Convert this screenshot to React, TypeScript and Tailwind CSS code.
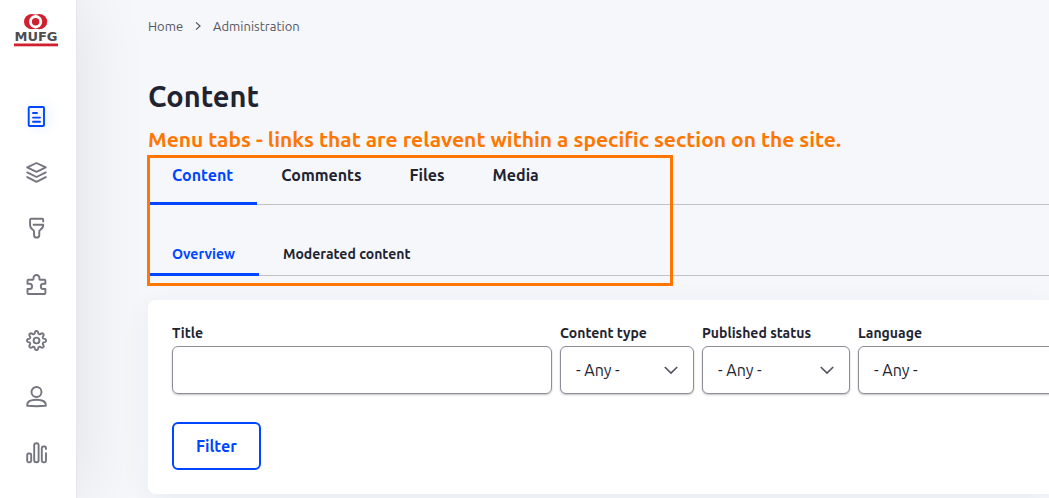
import React from 'react';

type IconProps = { children: React.ReactNode };

const Icon = ({ children }: IconProps) => (
  <svg
    className="h-6 w-6"
    viewBox="0 0 24 24"
    fill="none"
    stroke="currentColor"
    strokeWidth="1.9"
    strokeLinejoin="round"
    strokeLinecap="round"
    aria-hidden="true"
  >
    {children}
  </svg>
);

// Eight rounded teeth around a common centre
const gearPath = () => {
  const points: string[] = [];
  for (let i = 0; i < 128; i++) {
    const a = (i / 128) * Math.PI * 2;
    const wave = Math.cos(8 * a);
    const r = 8.2 + 1.4 * Math.tanh(wave * 1.6);
    points.push(`${(12.5 + r * Math.cos(a)).toFixed(2)} ${(12.5 + r * Math.sin(a)).toFixed(2)}`);
  }
  return `M${points.join('L')}Z`;
};

const menuItems = [
  {
    label: 'Content',
    icon: (
      <Icon>
        <rect x="4.7" y="3" width="15.3" height="19" rx="1" />
        <path d="M9 9h4M9 13.6h7M9 17.7h7" />
      </Icon>
    ),
  },
  {
    label: 'Structure',
    icon: (
      <Icon>
        <path d="M12.5 3 21.8 7.4 12.5 11.8 3.2 7.4ZM3.2 12.4l9.3 4.6 9.3-4.6M3.2 17.1l9.3 4.8 9.3-4.8" />
      </Icon>
    ),
  },
  {
    label: 'Appearance',
    icon: (
      <Icon>
        <path d="M19.2 5.5V3.7a1 1 0 0 0-1-1H7.1a1 1 0 0 0-1 1V9c0 3 1.2 3.9 2.9 4.8.8.4 1 .9 1 1.7v3.4a2.65 2.65 0 0 0 5.3 0v-3.4c0-.8.2-1.3 1-1.7 1.7-.9 2.9-1.8 2.9-4.8v-.3H9.6" />
      </Icon>
    ),
  },
  {
    label: 'Extend',
    icon: (
      <Icon>
        <path d="M4.5 7.8h4.2c.8 0 .9-.5.8-1.3a3 3 0 1 1 5.9 0c-.1.8 0 1.3.8 1.3h4.2a1 1 0 0 1 1 1v3h-2a2.4 2.4 0 0 0 0 5.2h2v4a1 1 0 0 1-1 1H4.5a1 1 0 0 1-1-1v-4h2a2.4 2.4 0 0 0 0-5.2h-2v-3a1 1 0 0 1 1-1Z" />
      </Icon>
    ),
  },
  {
    label: 'Configuration',
    icon: (
      <Icon>
        <path d={gearPath()} />
        <circle cx="12.5" cy="12.5" r="2.9" />
      </Icon>
    ),
  },
  {
    label: 'People',
    icon: (
      <Icon>
        <circle cx="12.5" cy="8" r="5" />
        <path d="M3.1 21.2c0-3.6 4.2-5.4 9.4-5.4s9.4 1.8 9.4 5.4c0 .4-.2.6-.6.6-5.8.5-11.8.5-17.6 0-.4 0-.6-.2-.6-.6Z" />
      </Icon>
    ),
  },
  {
    label: 'Reports',
    icon: (
      <Icon>
        <rect x="3.2" y="13.5" width="4" height="8.7" rx="1.5" />
        <rect x="10.2" y="3.2" width="4.4" height="19" rx="2" />
        <path d="M22 9V8a1.5 1.5 0 0 0-1.5-1.5h-1.2A1.5 1.5 0 0 0 17.8 8v12.7a1.5 1.5 0 0 0 1.5 1.5h1.2a1.5 1.5 0 0 0 1.5-1.5v-7.5" />
      </Icon>
    ),
  },
];

const primaryTabs = ['Content', 'Comments', 'Files', 'Media'];
const secondaryTabs = ['Overview', 'Moderated content'];

const Logo = () => (
  <a href="#home" aria-label="MUFG" className="ml-3.5 block w-11 pt-3.5">
    <svg viewBox="0 0 44 34" className="h-[34px] w-11">
      <ellipse cx="18" cy="7.7" rx="8" ry="7.6" fill="#cf2030" />
      <ellipse cx="25.2" cy="7.7" rx="8" ry="7.6" fill="#cf2030" />
      <circle cx="21.6" cy="7.7" r="6.6" fill="#fff" />
      <circle cx="21.6" cy="7.7" r="3.7" fill="#cf2030" />
      <text x="22" y="27.3" textAnchor="middle" fontSize="13" fontWeight="700" fill="#4d4d4f" fontFamily="'DejaVu Sans', sans-serif">
        MUFG
      </text>
      <rect y="29.5" width="44" height="2.8" fill="#cf2030" />
    </svg>
  </a>
);

const Sidebar = () => (
  <aside className="relative z-10 box-content flex w-19 shrink-0 flex-col border-r border-[#e6e7ec] bg-white shadow-[0_0_72px_rgba(0,0,0,0.1)]">
    <Logo />
    <nav aria-label="Administration menu" className="mt-10">
      <ul>
        {menuItems.map((item, index) => (
          <li key={item.label}>
            <a
              href={`#${item.label.toLowerCase()}`}
              aria-label={item.label}
              className={`flex h-14 items-center pl-6 ${
                index === 0 ? 'text-[#0045ff] drop-shadow-[4px_0_6px_rgba(0,69,255,0.15)]' : 'text-[#75757f]'
              }`}
            >
              {item.icon}
            </a>
          </li>
        ))}
      </ul>
    </nav>
  </aside>
);

type SelectFieldProps = { id: string; label: string; className: string };

const SelectField = ({ id, label, className }: SelectFieldProps) => (
  <div className={className}>
    <label htmlFor={id} className="block text-sm leading-[18px] font-bold whitespace-nowrap">
      {label}
    </label>
    <div className="relative mt-1">
      <select
        id={id}
        className="h-12 w-full appearance-none rounded-md border border-[#8e8e9b] bg-white pl-[15px] text-base shadow-[0_1px_2px_rgba(0,0,0,0.25)]"
      >
        <option>- Any -</option>
      </select>
      <svg
        className="pointer-events-none absolute top-4 right-[15px] h-4 w-4"
        viewBox="0 0 16 16"
        fill="none"
        stroke="#55555f"
        strokeWidth="1.7"
        aria-hidden="true"
      >
        <path d="m1.8 5 6.2 6 6.2-6" />
      </svg>
    </div>
  </div>
);

export default function App() {
  return (
    <div className="flex min-h-screen overflow-hidden bg-[#f5f7fb] font-['Ubuntu','Noto_Sans',sans-serif] text-[#222330]">
      <Sidebar />

      <main className="min-w-0 flex-1 pt-4 pl-[71px]">
        {/* Breadcrumb */}
        <nav aria-label="Breadcrumb" className="flex items-center gap-3 text-[13px] leading-5 text-[#55565f]">
          <a href="#home">Home</a>
          <svg className="h-2 w-1.5" viewBox="0 0 6 8" fill="none" stroke="currentColor" strokeWidth="1.2" aria-hidden="true">
            <path d="m1 .4 4 3.6-4 3.6" />
          </svg>
          <a href="#administration">Administration</a>
        </nav>

        <h1 className="mt-10 text-[29px] leading-10 font-semibold">Content</h1>

        <p className="mt-[11px] text-[21px] leading-6 font-semibold whitespace-nowrap text-[#ff7700]">
          Menu tabs - links that are relavent within a specific section on the site.
        </p>

        {/* Tabs with the highlighted area drawn on top */}
        <div className="relative mt-1">
          <nav aria-label="Primary tabs">
            <ul className="flex h-[50px] border-b border-[#c0c1c9] text-base leading-6">
              {primaryTabs.map((tab, index) => (
                <li key={tab} className="-mb-px flex">
                  <a
                    href={`#${tab.toLowerCase()}`}
                    className={`border-b-3 px-6 pt-2 ${
                      index === 0 ? 'border-[#0045ff] font-bold text-[#0045ff]' : 'border-transparent font-semibold'
                    }`}
                  >
                    {tab}
                  </a>
                </li>
              ))}
            </ul>
          </nav>
          <nav aria-label="Secondary tabs" className="pt-[37px]">
            <ul className="flex h-[34px] border-b border-[#c0c1c9] text-sm leading-6">
              {secondaryTabs.map((tab, index) => (
                <li key={tab} className="-mb-px flex">
                  <a
                    href={`#${tab.toLowerCase().replace(' ', '-')}`}
                    className={`border-b-3 px-6 ${
                      index === 0 ? 'border-[#0045ff] font-bold text-[#0045ff]' : 'border-transparent font-semibold'
                    }`}
                  >
                    {tab}
                  </a>
                </li>
              ))}
            </ul>
          </nav>
          <div className="pointer-events-none absolute top-0 -left-px h-[131px] w-[526px] border-3 border-[#ff7700]" />
        </div>

        {/* Filters */}
        <form
          onSubmit={(e) => e.preventDefault()}
          className="mt-6 rounded-l-lg bg-white p-6 shadow-[0_6px_30px_rgba(20,45,82,0.06)]"
        >
          <div className="flex gap-2">
            <div className="w-[380px] shrink-0">
              <label htmlFor="title" className="block text-sm leading-[18px] font-bold">
                Title
              </label>
              <input
                id="title"
                type="text"
                className="mt-1 block h-12 w-full rounded-md border border-[#8e8e9b] px-4 shadow-[0_1px_2px_rgba(0,0,0,0.25)]"
              />
            </div>
            <SelectField id="type" label="Content type" className="w-[134px] shrink-0" />
            <SelectField id="status" label="Published status" className="w-[148px] shrink-0" />
            <SelectField id="language" label="Language" className="w-[240px] shrink-0" />
          </div>
          <button
            type="submit"
            className="mt-7 h-12 rounded-md border-2 border-[#0045ff] px-[22px] text-base font-bold text-[#0045ff]"
          >
            Filter
          </button>
        </form>
      </main>
    </div>
  );
}
